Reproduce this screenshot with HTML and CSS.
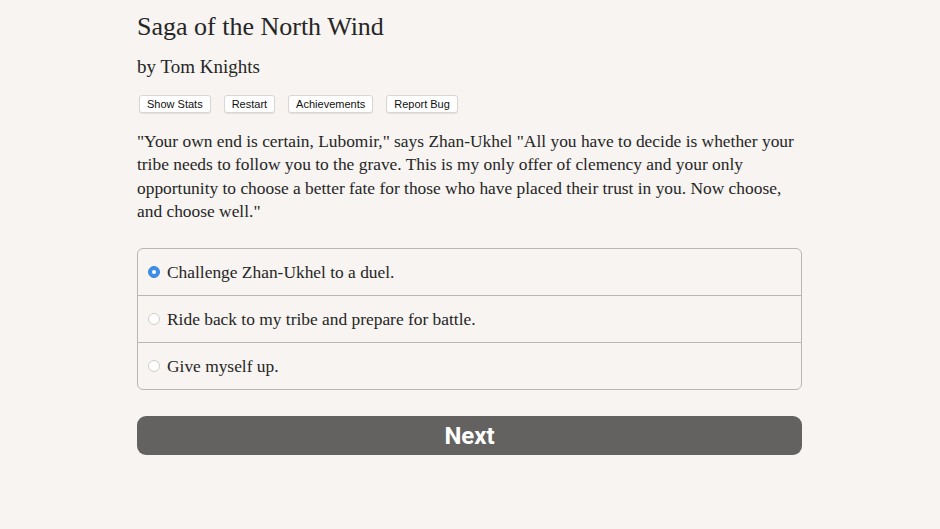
FILE: index.html
```html
<!DOCTYPE html>
<html>
<head>
<meta charset="utf-8">
<link rel="stylesheet" href="styles.css">
</head>
<body>
<main class="page">
  <h1 class="title">Saga of the North Wind</h1>
  <h2 class="author">by Tom Knights</h2>
  <div class="toolbar">
    <button class="tool">Show Stats</button>
    <button class="tool">Restart</button>
    <button class="tool">Achievements</button>
    <button class="tool">Report Bug</button>
  </div>
  <p class="story">"Your own end is certain, Lubomir," says Zhan-Ukhel "All you have to decide is whether your tribe needs to follow you to the grave. This is my only offer of clemency and your only opportunity to choose a better fate for those who have placed their trust in you. Now choose, and choose well."</p>
  <div class="choices">
    <label class="choice"><span class="radio checked"></span>Challenge Zhan-Ukhel to a duel.</label>
    <label class="choice"><span class="radio"></span>Ride back to my tribe and prepare for battle.</label>
    <label class="choice"><span class="radio"></span>Give myself up.</label>
  </div>
  <button class="next">Next</button>
</main>
</body>
</html>
```
FILE: styles.css
```css
html, body {
  margin: 0;
  padding: 0;
  background: #f7f4f1;
}
body {
  font-family: "Liberation Serif", "DejaVu Serif", serif;
  color: #262626;
}
.page {
  width: 665px;
  margin: 0 0 0 137px;
  padding-top: 12px;
}
.title {
  font-size: 26px;
  font-weight: normal;
  margin: 0;
  line-height: 30px;
}
.author {
  font-size: 19px;
  font-weight: normal;
  margin: 13px 0 0;
  line-height: 24px;
}
.toolbar {
  display: flex;
  gap: 13px;
  margin-top: 16px;
  padding-left: 2px;
}
.tool {
  font-family: "Liberation Sans", Arial, sans-serif;
  font-size: 11px;
  color: #111;
  background: #fff;
  border: 1px solid #d9d6d3;
  border-radius: 3px;
  height: 18px;
  padding: 0 7px;
  line-height: 16px;
  box-shadow: 0 1px 1px rgba(0,0,0,0.08);
}
.story {
  font-size: 17.4px;
  line-height: 23.3px;
  margin: 17px 0 0;
}
.choices {
  margin-top: 25px;
  border: 1px solid #b9b7b5;
  border-radius: 6px;
  display: flex;
  flex-direction: column;
}
.choice {
  display: flex;
  align-items: center;
  height: 46px;
  font-size: 17.4px;
  padding-left: 10px;
  border-top: 1px solid #b9b7b5;
}
.choice:first-child {
  border-top: none;
}
.radio {
  width: 12px;
  height: 12px;
  border-radius: 50%;
  border: 1px solid #d0cecb;
  background: #fff;
  margin-right: 7px;
  box-sizing: border-box;
}
.radio.checked {
  background: #3d8ee8;
  border-color: #3b87de;
  position: relative;
}
.radio.checked::after {
  content: "";
  position: absolute;
  left: 3px;
  top: 3px;
  width: 4px;
  height: 4px;
  border-radius: 50%;
  background: #fff;
}
.next {
  display: block;
  width: 665px;
  height: 39px;
  margin-top: 26px;
  background: #636260;
  color: #fff;
  border: none;
  border-radius: 9px;
  font-family: "Roboto", "Liberation Sans", sans-serif;
  font-weight: bold;
  font-size: 24px;
}
```
